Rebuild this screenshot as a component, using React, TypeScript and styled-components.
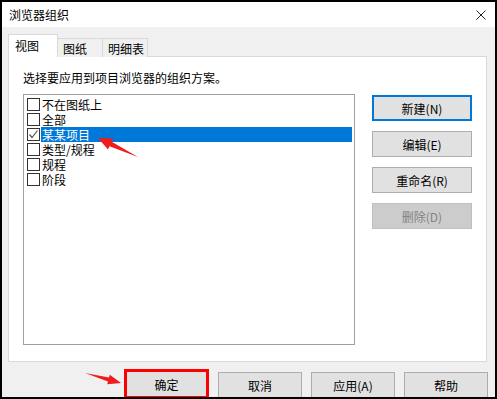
import styled, { createGlobalStyle, css } from "styled-components";

const GlobalStyle = createGlobalStyle`
  body {
    margin: 0;
    font-family: "Noto Sans CJK SC", "Liberation Sans", sans-serif;
    font-size: 12px;
    color: #000;
  }
`;

const Page = styled.div`
  position: relative;
  width: 497px;
  height: 399px;
`;

const Window = styled.div`
  box-sizing: border-box;
  width: 497px;
  height: 399px;
  border: 2px solid #000;
  background: #f0f0f0;
  display: flex;
  flex-direction: column;
  overflow: hidden;
`;

const TitleBar = styled.div`
  height: 25px;
  flex: none;
  background: #fff;
  display: flex;
  align-items: center;
  justify-content: space-between;
  padding: 0 9px 0 7px;
  font-size: 12px;
`;

const Content = styled.div`
  padding: 8px 8px 0 6px;
  display: flex;
  flex-direction: column;
`;

const TabBar = styled.div`
  display: flex;
  align-items: flex-end;
  height: 22px;
  position: relative;
  z-index: 1;
  margin-bottom: -1px;
`;

const Tab = styled.div<{ $active?: boolean; $width: number }>`
  box-sizing: border-box;
  width: ${(p) => p.$width}px;
  border: 1px solid #d9d9d9;
  border-bottom: none;
  display: flex;
  align-items: center;
  padding-left: 6px;
  ${(p) =>
    p.$active
      ? css`
          height: 23px;
          background: #fff;
          padding-bottom: 2px;
        `
      : css`
          height: 19px;
          background: #f0f0f0;
          border-left: none;
          padding-left: 5px;
        `}
`;

const Panel = styled.div`
  box-sizing: border-box;
  height: 306px;
  background: #fff;
  border: 1px solid #d9d9d9;
  padding: 13px 14px 0 14px;
  display: flex;
  flex-direction: column;
`;

const Label = styled.div`
  line-height: 16px;
  height: 16px;
  margin-bottom: 8px;
`;

const Body = styled.div`
  display: flex;
  gap: 17px;
`;

const ListBox = styled.div`
  box-sizing: border-box;
  width: 332px;
  height: 251px;
  border: 1px solid #a0a0a0;
  padding: 2px 2px 0 2px;
`;

const Row = styled.div`
  display: flex;
  align-items: center;
  height: 15px;
`;

const Box = styled.span`
  box-sizing: border-box;
  width: 13px;
  height: 13px;
  border: 1px solid #333;
  background: #fff;
  margin: 0 1px 0 1px;
  flex: none;
  display: flex;
  align-items: center;
  justify-content: center;
`;

const ItemText = styled.span<{ $selected?: boolean }>`
  flex: 1;
  height: 15px;
  line-height: 15px;
  padding-left: 1px;
  ${(p) =>
    p.$selected &&
    css`
      background: #0078d7;
      color: #fff;
    `}
`;

const ButtonColumn = styled.div`
  display: flex;
  flex-direction: column;
  gap: 10px;
  padding-top: 1px;
`;

const Button = styled.div<{ $variant?: "default" | "disabled"; $width: number }>`
  box-sizing: border-box;
  width: ${(p) => p.$width}px;
  height: 26px;
  background: #e1e1e1;
  border: 1px solid #adadad;
  display: flex;
  align-items: center;
  justify-content: center;
  font-size: 12px;
  ${(p) =>
    p.$variant === "default" &&
    css`
      border: 2px solid #0078d7;
    `}
  ${(p) =>
    p.$variant === "disabled" &&
    css`
      background: #cccccc;
      border-color: #bfbfbf;
      color: #838383;
    `}
`;

const Footer = styled.div`
  display: flex;
  justify-content: flex-end;
  align-items: flex-start;
  gap: 9px;
  padding: 10px 7px 0 0;
`;

const FooterButton = styled(Button)<{ $marked?: boolean }>`
  height: 27px;
  ${(p) =>
    p.$marked &&
    css`
      border: 3px solid #ff0000;
      margin-top: -3px;
      height: 30px;
    `}
`;

const Overlay = styled.svg`
  position: absolute;
  left: 0;
  top: 0;
  pointer-events: none;
`;

const items = ["不在图纸上", "全部", "某某项目", "类型/规程", "规程", "阶段"];

const App = () => {
  return (
    <>
      <GlobalStyle />
      <Page>
        <Window>
          <TitleBar>
            <span>浏览器组织</span>
            <svg width="10" height="10" viewBox="0 0 10 10">
              <path d="M0.5 0.5 L9.5 9.5 M9.5 0.5 L0.5 9.5" stroke="#222" strokeWidth="1" />
            </svg>
          </TitleBar>
          <Content>
            <TabBar>
              <Tab $active $width={50}>视图</Tab>
              <Tab $width={45}>图纸</Tab>
              <Tab $width={45}>明细表</Tab>
            </TabBar>
            <Panel>
              <Label>选择要应用到项目浏览器的组织方案。</Label>
              <Body>
                <ListBox>
                  {items.map((item, idx) => (
                    <Row key={item}>
                      <Box>
                        {idx === 2 && (
                          <svg width="11" height="11" viewBox="0 0 11 11">
                            <path d="M1.5 5.5 L4 8.5 L9.5 1.5" fill="none" stroke="#555" strokeWidth="1.2" />
                          </svg>
                        )}
                      </Box>
                      <ItemText $selected={idx === 2}>{item}</ItemText>
                    </Row>
                  ))}
                </ListBox>
                <ButtonColumn>
                  <Button $width={100} $variant="default">新建(N)</Button>
                  <Button $width={100}>编辑(E)</Button>
                  <Button $width={100}>重命名(R)</Button>
                  <Button $width={100} $variant="disabled">删除(D)</Button>
                </ButtonColumn>
              </Body>
            </Panel>
          </Content>
          <Footer>
            <FooterButton $width={85} $marked>确定</FooterButton>
            <FooterButton $width={84}>取消</FooterButton>
            <FooterButton $width={84}>应用(A)</FooterButton>
            <FooterButton $width={84}>帮助</FooterButton>
          </Footer>
        </Window>
        <Overlay width="497" height="399" viewBox="0 0 497 399">
          <polygon
            points="98,138 113.2,138.6 111.7,141.7 138,157 109.5,146.3 108,149.4"
            fill="#f01b1b"
          />
          <polygon
            points="121,383 109.8,374.7 109,377.6 85,373 108,381.4 107.2,384.3"
            fill="#f01b1b"
          />
        </Overlay>
      </Page>
    </>
  );
};

export default App;
